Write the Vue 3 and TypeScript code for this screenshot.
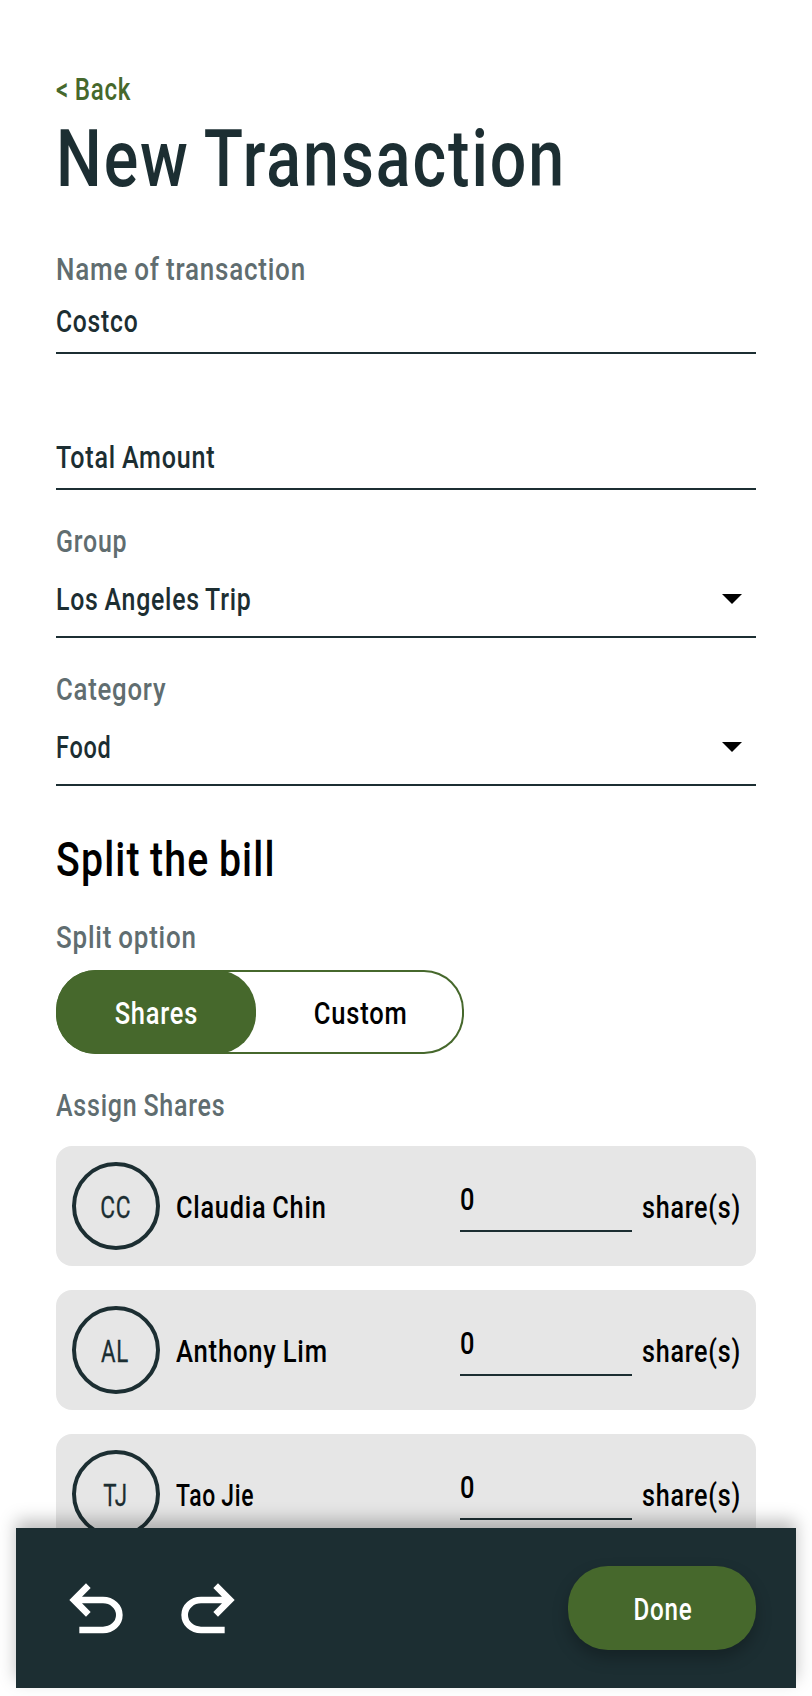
<script setup lang="ts">
import { ref } from 'vue'

interface Member {
  initials: string
  initialsWidth: number
  name: string
  nameWidth: number
  shares: number
}

interface Choice {
  label: string
  labelWidth: number
  value: string
  valueWidth: number
}

const selects: Choice[] = [
  { label: 'Group', labelWidth: 69, value: 'Los Angeles Trip', valueWidth: 193 },
  { label: 'Category', labelWidth: 109, value: 'Food', valueWidth: 52.5 },
]

const options = [
  { label: 'Shares', width: 81.5 },
  { label: 'Custom', width: 90.5 },
]
const selected = ref('Shares')

const members = ref<Member[]>([
  { initials: 'CC', initialsWidth: 29, name: 'Claudia Chin', nameWidth: 147.5, shares: 0 },
  { initials: 'AL', initialsWidth: 27, name: 'Anthony Lim', nameWidth: 149.5, shares: 0 },
  { initials: 'TJ', initialsWidth: 22.5, name: 'Tao Jie', nameWidth: 77.5, shares: 0 },
])

// Condenses a line of text horizontally until its ink is the given number of pixels wide.
const vFit = {
  mounted(el: HTMLElement, binding: { value: number }) {
    const ctx = document.createElement('canvas').getContext('2d')
    if (!ctx) return
    const style = getComputedStyle(el)
    ctx.font = `${style.fontWeight} ${style.fontSize} ${style.fontFamily}`
    const text = (el.textContent ?? '').trim()
    const m = ctx.measureText(text)
    const tracking = (parseFloat(style.letterSpacing) || 0) * (text.length - 1)
    const wordGaps = (parseFloat(style.wordSpacing) || 0) * (text.split(' ').length - 1)
    const ink = m.actualBoundingBoxRight + m.actualBoundingBoxLeft + tracking + wordGaps
    if (ink > 0) el.style.transform = `scaleX(${binding.value / ink})`
  },
}
</script>

<template>
  <div class="screen">
    <main class="content">
      <a class="back"><span v-fit="74.7" class="t">&lt; Back</span></a>
      <h1 class="title"><span v-fit="502" class="t">New Transaction</span></h1>

      <div class="label name-label"><span v-fit="246" class="t">Name of transaction</span></div>
      <div class="field"><span v-fit="80" class="t">Costco</span></div>
      <div class="field amount"><span v-fit="158" class="t">Total Amount</span></div>

      <section v-for="item in selects" :key="item.label" class="choice">
        <div class="label"><span v-fit="item.labelWidth" class="t">{{ item.label }}</span></div>
        <div class="select">
          <span v-fit="item.valueWidth" class="t">{{ item.value }}</span>
          <svg class="caret" width="20" height="10" viewBox="0 0 20 10"><path d="M0 0H20L10 10Z" /></svg>
        </div>
      </section>

      <h2 class="heading"><span v-fit="215" class="t">Split the bill</span></h2>
      <div class="label split-label"><span v-fit="137.7" class="t">Split option</span></div>
      <div class="toggle">
        <button
          v-for="o in options"
          :key="o.label"
          class="option"
          :class="{ active: selected === o.label }"
          @click="selected = o.label"
        >
          <span v-fit="o.width" class="t mid">{{ o.label }}</span>
        </button>
      </div>

      <div class="label assign-label"><span v-fit="168.3" class="t">Assign Shares</span></div>
      <div class="members">
        <div v-for="m in members" :key="m.name" class="member">
          <div class="avatar"><span v-fit="m.initialsWidth" class="t mid">{{ m.initials }}</span></div>
          <div class="name"><span v-fit="m.nameWidth" class="t">{{ m.name }}</span></div>
          <div class="count"><span v-fit="12.7" class="t">{{ m.shares }}</span></div>
          <div class="unit"><span v-fit="96.5" class="t">share(s)</span></div>
        </div>
      </div>
    </main>

    <footer class="bar">
      <svg class="icon" viewBox="0 0 24 24">
        <path d="M7 19v-2h7.1q1.575 0 2.737-1Q18 15 18 13.5T16.837 11Q15.675 10 14.1 10H7.8l2.6 2.6L9 14 4 9l5-5 1.4 1.4L7.8 8h6.3q2.425 0 4.163 1.575Q20 11.15 20 13.5q0 2.35-1.737 3.925Q16.525 19 14.1 19Z" />
      </svg>
      <svg class="icon redo" viewBox="0 0 24 24">
        <path d="M7 19v-2h7.1q1.575 0 2.737-1Q18 15 18 13.5T16.837 11Q15.675 10 14.1 10H7.8l2.6 2.6L9 14 4 9l5-5 1.4 1.4L7.8 8h6.3q2.425 0 4.163 1.575Q20 11.15 20 13.5q0 2.35-1.737 3.925Q16.525 19 14.1 19Z" />
      </svg>
      <button class="done"><span v-fit="56.5" class="t mid">Done</span></button>
    </footer>
  </div>
</template>

<style>
body {
  background: #fff;
}
</style>

<style scoped>
.screen {
  position: relative;
  box-sizing: border-box;
  width: 812px;
  height: 1696px;
  overflow: hidden;
  background: #fff;
  color: #1c2e32;
  font-family: Roboto, "Liberation Sans", sans-serif;
  font-size: 32px;
  font-weight: 500;
  line-height: 40px;
}
.content {
  display: flex;
  flex-direction: column;
  padding: 69px 56px 0;
}
.t {
  display: inline-block;
  white-space: nowrap;
  letter-spacing: 0.03em;
  word-spacing: -0.04em;
  transform-origin: left center;
}
.mid {
  margin-right: -0.03em;
  transform-origin: center;
}
.back {
  height: 40px;
  color: #46682c;
}
.title {
  margin: 10px 0 0;
  height: 80px;
  font-size: 80px;
  line-height: 80px;
  font-weight: 500;
}
.label {
  height: 40px;
  color: #606d70;
}
.name-label {
  margin-top: 50px;
}
.field {
  height: 40px;
  margin-top: 12px;
  padding-bottom: 11px;
  border-bottom: 2px solid #1c2e32;
}
.amount {
  margin-top: 83px;
}
.choice {
  margin-top: 31px;
}
.select {
  display: flex;
  justify-content: space-between;
  align-items: flex-start;
  height: 40px;
  margin-top: 18px;
  padding: 0 14px 17px 0;
  border-bottom: 2px solid #1c2e32;
}
.caret {
  display: block;
  margin-top: 15px;
  fill: #000;
}
.heading {
  margin: 46px 0 0;
  height: 56px;
  color: #000;
  font-size: 48px;
  line-height: 56px;
  font-weight: 500;
}
.split-label {
  margin-top: 29px;
}
.toggle {
  box-sizing: border-box;
  display: flex;
  width: 408px;
  height: 84px;
  margin-top: 13px;
  border-radius: 40px;
  box-shadow: inset 0 0 0 2px #46682c;
}
.option {
  display: flex;
  flex: 0 0 208px;
  align-items: center;
  justify-content: center;
  height: 84px;
  padding: 2px 0 0;
  border: 0;
  border-radius: 40px;
  background: none;
  color: #000;
  font: inherit;
}
.option:first-child {
  flex-basis: 200px;
}
.option.active {
  background: #46682c;
  color: #fff;
}
.assign-label {
  margin-top: 31px;
}
.members {
  display: flex;
  flex-direction: column;
  gap: 24px;
  margin-top: 21px;
}
.member {
  box-sizing: border-box;
  display: grid;
  grid-template-columns: 88px 300px 182px 98px;
  align-items: center;
  height: 120px;
  padding: 0 16px;
  border-radius: 16px;
  background: #e6e6e6;
  color: #000;
}
.avatar {
  box-sizing: border-box;
  display: flex;
  align-items: center;
  justify-content: center;
  width: 88px;
  height: 88px;
  padding: 2px 2px 0 0;
  border: 4px solid #1c2e32;
  border-radius: 50%;
  color: #1c2e32;
  font-weight: 400;
  -webkit-text-stroke: 0.3px #1c2e32;
}
.name {
  padding: 2px 0 0 16px;
}
.count {
  width: 172px;
  height: 40px;
  margin-bottom: 2px;
  padding-bottom: 11px;
  border-bottom: 2px solid #1c2e32;
}
.unit {
  padding-top: 2px;
}
.bar {
  position: absolute;
  left: 16px;
  top: 1528px;
  box-sizing: border-box;
  display: flex;
  align-items: center;
  gap: 32px;
  width: 780px;
  height: 160px;
  padding: 0 40px;
  background: #1c2e32;
  box-shadow: 0 -8px 16px rgba(0, 0, 0, 0.25);
}
.icon {
  width: 80px;
  height: 80px;
  margin-top: 4px;
  fill: #fff;
}
.redo {
  transform: scaleX(-1);
}
.done {
  display: flex;
  align-items: center;
  justify-content: center;
  width: 188px;
  height: 84px;
  margin-left: auto;
  padding: 2px 0 0;
  border: 0;
  border-radius: 40px;
  background: #46682c;
  color: #fff;
  font: inherit;
  box-shadow: 0 8px 16px rgba(0, 0, 0, 0.25);
}
</style>
